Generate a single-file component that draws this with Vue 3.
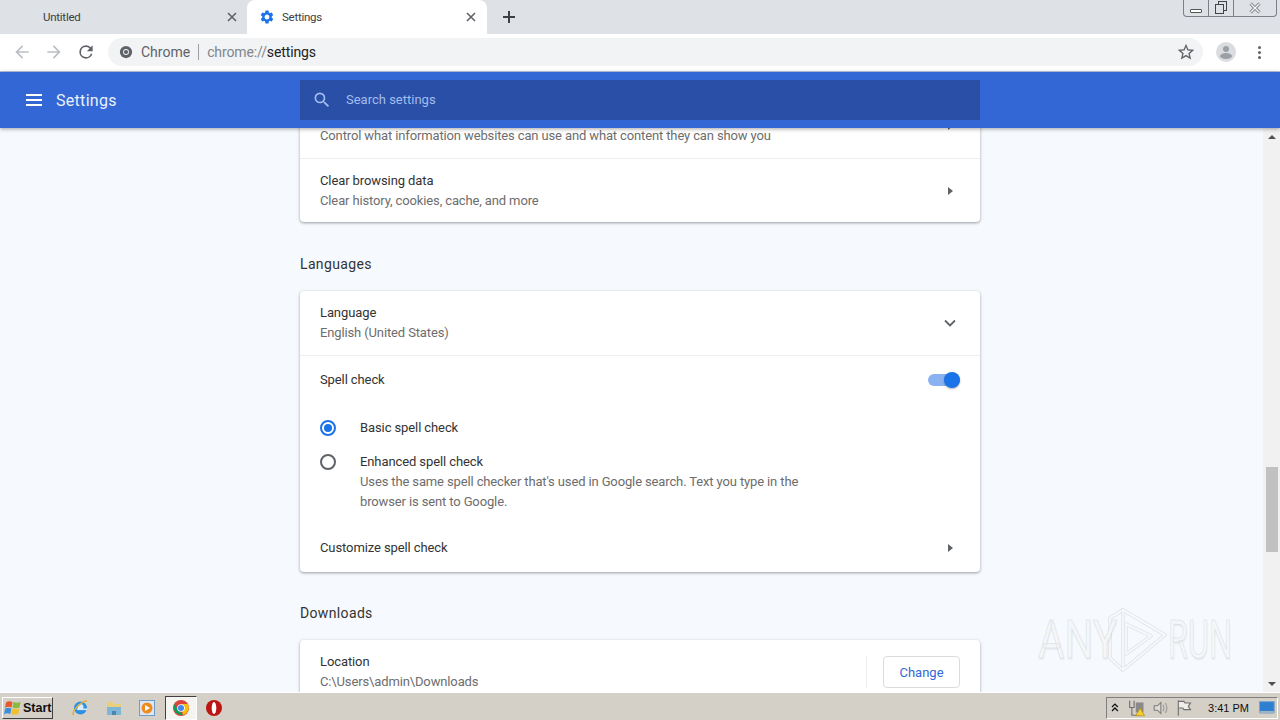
<template>
  <div class="window">
    <!-- tab strip -->
    <div class="tabstrip">
      <div class="tab">
        <span class="tab-title">Untitled</span>
        <svg class="tab-close" viewBox="0 0 10 10"><path d="M1 1l8 8M9 1l-8 8" /></svg>
      </div>
      <div class="tab active">
        <svg class="gear" viewBox="0 0 24 24"><path :d="gearPath" /></svg>
        <span class="tab-title">Settings</span>
        <svg class="tab-close" viewBox="0 0 10 10"><path d="M1 1l8 8M9 1l-8 8" /></svg>
      </div>
      <svg class="new-tab" viewBox="0 0 12 12"><path d="M6 0v12M0 6h12" /></svg>
      <div class="win-controls">
        <div class="win-btn min"><span class="min-bar"></span></div>
        <div class="win-btn restore"><span class="back"></span><span class="front"></span></div>
        <div class="win-btn close">
          <svg viewBox="0 0 14 12">
            <path class="x-outer" d="M2.500 1.500l9 9M11.500 1.500l-9 9" />
            <path class="x-inner" d="M2.500 1.500l9 9M11.500 1.500l-9 9" />
          </svg>
        </div>
      </div>
    </div>

    <!-- toolbar -->
    <div class="toolbar">
      <svg class="nav-icon" viewBox="0 0 24 24"><path fill="#bcc0c4" d="M20 11H7.830l5.590-5.590L12 4l-8 8 8 8 1.410-1.410L7.830 13H20z" /></svg>
      <svg class="nav-icon" viewBox="0 0 24 24"><path fill="#bcc0c4" d="M4 11h12.170l-5.590-5.590L12 4l8 8-8 8-1.410-1.410L16.170 13H4z" /></svg>
      <svg class="nav-icon" viewBox="0 0 24 24"><path fill="#5f6368" d="M17.650 6.350A7.960 7.960 0 0 0 12 4a8 8 0 1 0 7.730 10h-2.080A6 6 0 1 1 12 6c1.660 0 3.140.69 4.220 1.780L13 11h7V4z" /></svg>
      <div class="omnibox">
        <svg class="chrome-mini" viewBox="0 0 16 16">
          <circle cx="8" cy="8" r="7" fill="#5f6368" />
          <circle cx="8" cy="8" r="3.400" fill="#f1f3f4" />
          <circle cx="8" cy="8" r="2.400" fill="#5f6368" />
        </svg>
        <span class="chip">Chrome</span>
        <span class="chip-sep"></span>
        <span class="url"><span class="url-dim">chrome://</span>settings</span>
        <svg class="star" viewBox="0 0 24 24"><path fill="#5f6368" d="M22 9.240l-7.190-.62L12 2 9.190 8.630 2 9.240l5.460 4.730L5.820 21 12 17.270 18.180 21l-1.630-7.030L22 9.240zM12 15.400l-3.760 2.270 1-4.280-3.320-2.880 4.380-.38L12 6.100l1.710 4.040 4.380.38-3.320 2.880 1 4.280L12 15.400z" /></svg>
      </div>
      <div class="avatar">
        <svg viewBox="0 0 20 20">
          <circle cx="10" cy="10" r="10" fill="#dadce0" />
          <circle cx="10" cy="7" r="3" fill="#9aa0a6" />
          <ellipse cx="10" cy="14" rx="6" ry="3" fill="#9aa0a6" />
        </svg>
      </div>
      <div class="dots"><span></span><span></span><span></span></div>
    </div>

    <!-- settings header -->
    <header class="settings-bar">
      <div class="bar-left">
        <div class="burger"><span></span><span></span><span></span></div>
        <span class="bar-title">Settings</span>
      </div>
      <div class="search">
        <svg class="search-icon" viewBox="0 0 24 24"><path fill="#a3bdf0" d="M15.500 14h-.79l-.28-.27A6.470 6.470 0 0 0 16 9.500 6.500 6.500 0 1 0 9.500 16c1.610 0 3.090-.59 4.230-1.570l.27.28v.79l5 4.990L20.490 19l-4.990-5zm-6 0C7.010 14 5 11.990 5 9.500S7.010 5 9.500 5 14 7.010 14 9.500 11.990 14 9.500 14z" /></svg>
        <span class="search-text">Search settings</span>
      </div>
    </header>

    <!-- page -->
    <div class="body">
      <main class="content">
        <div class="column">
          <section class="card">
            <div class="row two-line">
              <!-- 这一行的标题已滚到顶栏下面 -->
              <div class="row-text scrolled">
                <div class="sub">Control what information websites can use and what content they can show you</div>
              </div>
              <span class="arrow"></span>
            </div>
            <div class="row two-line sep">
              <div class="row-text">
                <div class="title">Clear browsing data</div>
                <div class="sub">Clear history, cookies, cache, and more</div>
              </div>
              <span class="arrow"></span>
            </div>
          </section>

          <h2 class="heading">Languages</h2>
          <section class="card">
            <div class="row two-line">
              <div class="row-text">
                <div class="title">Language</div>
                <div class="sub">English (United States)</div>
              </div>
              <svg class="chevron" viewBox="0 0 12 8"><path d="M1 1.500l5 5 5-5" /></svg>
            </div>
            <div class="row spell sep">
              <div class="title">Spell check</div>
              <div class="toggle"><span class="knob"></span></div>
            </div>
            <div class="radio-row">
              <span class="radio on"></span>
              <div class="title">Basic spell check</div>
            </div>
            <div class="radio-row tall">
              <span class="radio"></span>
              <div class="row-text">
                <div class="title">Enhanced spell check</div>
                <div class="sub desc">Uses the same spell checker that's used in Google search. Text you type in the browser is sent to Google.</div>
              </div>
            </div>
            <div class="row customize">
              <div class="title">Customize spell check</div>
              <span class="arrow"></span>
            </div>
          </section>

          <h2 class="heading compact">Downloads</h2>
          <section class="card">
            <div class="row two-line">
              <div class="row-text">
                <div class="title">Location</div>
                <div class="sub">C:\Users\admin\Downloads</div>
              </div>
              <div class="row-action"><button class="btn">Change</button></div>
            </div>
          </section>
        </div>
      </main>
      <div class="scrollbar">
        <span class="sb-up"></span>
        <div class="sb-track"><span class="sb-thumb"></span></div>
        <span class="sb-down"></span>
      </div>

      <!-- watermark -->
      <div class="watermark">
        <span class="wm-any">ANY</span>
        <svg viewBox="0 0 65 64">
          <g class="wm-under">
            <path d="M18 2L60 27 18 62zM21 16l25 12-25 18z" />
            <path d="M18 2L5 10v40l13 12" />
          </g>
          <g class="wm-over">
            <path d="M18 2L60 27 18 62zM21 16l25 12-25 18z" />
            <path d="M18 2L5 10v40l13 12" />
          </g>
        </svg>
        <span class="wm-run">RUN</span>
      </div>
    </div>

    <!-- taskbar -->
    <footer class="taskbar">
      <div class="start">
        <svg viewBox="0 0 18 16">
          <path fill="#e8582a" d="M2 2.500C4 1 6 1 8.500 2L7.500 7.500C5 6.500 3 6.500 1 8z" />
          <path fill="#8cba3c" d="M9.500 2c2.500 1 4.500 1 7 0l-1 5.500c-2.500 1-4.500 1-7 0z" />
          <path fill="#3b8ed8" d="M1 9c2-1.500 4-1.500 6.300-.5l-1 5.500C4 13 2 13 0 14.500z" />
          <path fill="#f2c02e" d="M8.300 8.500c2.500 1 4.500 1 7 0l-1 5.500c-2.500 1-4.500 1-7 0z" />
        </svg>
        <span>Start</span>
      </div>
      <div class="apps">
        <div class="app">
          <svg viewBox="0 0 18 18">
            <circle cx="9.500" cy="9" r="6.500" fill="#2f8fe0" />
            <circle cx="9.500" cy="8" r="3" fill="#d8ecfa" />
            <rect x="6" y="9.500" width="10" height="1.600" fill="#d8ecfa" />
            <path d="M2.500 16C0 12 11 2 16 2" fill="none" stroke="#d9b23a" stroke-width="1.600" />
          </svg>
        </div>
        <div class="app">
          <svg viewBox="0 0 18 18">
            <path fill="#e9cf7c" d="M2 3h6l1 2h7v4H2z" />
            <path fill="#7fb6d8" d="M2 8h14v8H2z" />
            <path fill="#4c86ad" d="M7 12h4v4H7z" />
          </svg>
        </div>
        <div class="app">
          <svg viewBox="0 0 18 18">
            <rect x="1.500" y="1.500" width="15" height="15" fill="#dbe8f4" stroke="#6d9cc6" />
            <circle cx="9" cy="9" r="5.500" fill="#ef8a1e" />
            <path fill="#fff" d="M7 6l5 3-5 3z" />
          </svg>
        </div>
        <div class="app current">
          <svg viewBox="0 0 18 18">
            <circle cx="9" cy="9" r="8" fill="#db4437" />
            <path fill="#f4c20d" d="M9 5h7a8 8 0 0 1-5 11z" />
            <path fill="#0f9d58" d="M2.200 5.200L6 11l5 5A8 8 0 0 1 2.200 5.200z" />
            <circle cx="9" cy="9" r="3.800" fill="#fff" />
            <circle cx="9" cy="9" r="3" fill="#4285f4" />
          </svg>
        </div>
        <div class="app">
          <svg viewBox="0 0 18 18">
            <circle cx="9" cy="9" r="8" fill="#bd1512" />
            <ellipse cx="9" cy="9" rx="2.300" ry="6" fill="#fff" />
          </svg>
        </div>
      </div>
      <div class="tray">
        <svg class="tray-up" viewBox="0 0 8 10"><path d="M1 4l3-3 3 3M1 8l3-3 3 3" /></svg>
        <svg class="tray-icon" viewBox="0 0 16 16">
          <path fill="none" stroke="#6f6f6f" d="M1.500 1.500v6h4v-6M3.500 7.500v7h7" />
          <rect x="7" y="3" width="7" height="9" fill="#8a8a8a" />
          <path fill="#f4cf2e" stroke="#a98a10" stroke-width=".6" d="M11 8l4 7H7z" />
        </svg>
        <svg class="tray-icon" viewBox="0 0 16 16">
          <path fill="#dedcd6" stroke="#7d7d7d" d="M2 6h3l3-3v10l-3-3H2z" />
          <path fill="none" stroke="#9a9a9a" d="M10 5c1 2 1 4 0 6M12 3.500c2 3 2 6 0 9" />
        </svg>
        <svg class="tray-icon" viewBox="0 0 16 16">
          <path fill="#f0eee8" stroke="#6f6f6f" d="M3 2h5l1 1.500h5l-2 3 2 3H8L7 8H3" />
          <path stroke="#6f6f6f" d="M3 1v14" />
        </svg>
        <span class="clock">3:41 PM</span>
        <svg class="desktop" viewBox="0 0 16 14">
          <rect x=".5" y=".5" width="15" height="11" fill="#2f7fd0" stroke="#7fa5c6" />
          <rect x="1" y="10" width="14" height="3" fill="#9eb3c4" />
        </svg>
      </div>
    </footer>
  </div>
</template>

<script setup>
// 设置页齿轮图标
const gearPath =
  'M19.14 12.94c.04-.3.06-.61.06-.94 0-.32-.02-.64-.07-.94l2.03-1.58c.18-.14.23-.41.12-.61l-1.92-3.32c-.12-.22-.37-.29-.59-.22l-2.39.96c-.5-.38-1.03-.7-1.62-.94l-.36-2.54c-.04-.24-.24-.41-.48-.41h-3.84c-.24 0-.43.17-.47.41l-.36 2.54c-.59.24-1.13.57-1.62.94l-2.39-.96c-.22-.08-.47 0-.59.22L2.74 8.87c-.12.21-.08.47.12.61l2.03 1.58c-.05.3-.09.63-.09.94s.02.64.07.94l-2.03 1.58c-.18.14-.23.41-.12.61l1.92 3.32c.12.22.37.29.59.22l2.39-.96c.5.38 1.03.7 1.62.94l.36 2.54c.05.24.24.41.48.41h3.84c.24 0 .44-.17.47-.41l.36-2.54c.59-.24 1.13-.56 1.62-.94l2.39.96c.22.08.47 0 .59-.22l1.92-3.32c.12-.22.07-.47-.12-.61l-2.01-1.58zM12 15.6c-1.98 0-3.6-1.62-3.6-3.6s1.62-3.6 3.6-3.6 3.6 1.62 3.6 3.6-1.62 3.6-3.6 3.6z'
</script>

<style>
html,
body {
  margin: 0;
  overflow: hidden;
}
</style>

<style scoped>
.window {
  width: 1280px;
  height: 720px;
  display: flex;
  flex-direction: column;
  overflow: hidden;
  font-family: Roboto, "Liberation Sans", sans-serif;
  font-size: 13px;
  color: #333;
  background: #f6f9fd;
}

/* tab strip */
.tabstrip {
  height: 34px;
  flex: none;
  display: flex;
  align-items: flex-end;
  background: #dee1e6;
  position: relative;
}

.tab {
  width: 247px;
  height: 34px;
  box-sizing: border-box;
  padding: 0 10px 0 43px;
  display: flex;
  align-items: center;
  font-size: 11.5px;
  letter-spacing: -0.25px;
}

.tab.active {
  width: 240px;
  background: #fff;
  border-radius: 8px 8px 0 0;
  padding: 0 11px 0 12px;
}

.tab-title {
  flex: 1;
  color: #3c4043;
  white-space: nowrap;
}

.gear {
  width: 16px;
  height: 16px;
  margin-right: 7px;
  fill: #1a73e8;
}

.tab-close {
  width: 10px;
  height: 10px;
  fill: none;
  stroke: #5f6368;
  stroke-width: 1.6;
}

.new-tab {
  width: 12px;
  height: 12px;
  margin: 0 0 11px 16px;
  fill: none;
  stroke: #3c4043;
  stroke-width: 2;
}

.win-controls {
  position: absolute;
  top: 0;
  left: 1183px;
  height: 16px;
  display: flex;
  border: 1px solid #7b8087;
  border-top: none;
  border-radius: 0 0 4px 4px;
}

.win-btn {
  display: flex;
  align-items: center;
  justify-content: center;
  position: relative;
  box-sizing: border-box;
}

.min {
  width: 25px;
  border-right: 1px solid #7b8087;
}

.min-bar {
  width: 10px;
  height: 2px;
  margin-top: 5px;
  border: 1px solid #555;
  border-radius: 1px;
  background: #fff;
}

.restore {
  width: 25px;
  border-right: 1px solid #7b8087;
}

.back,
.front {
  position: absolute;
  border: 1px solid #444;
  background: #dee1e6;
}

.back {
  top: 1px;
  left: 9px;
  width: 7px;
  height: 8px;
}

.front {
  top: 4px;
  left: 6px;
  width: 7px;
  height: 8px;
}

.close {
  width: 42px;
}

.close svg {
  width: 14px;
  height: 12px;
  fill: none;
}

.x-outer {
  stroke: #666;
  stroke-width: 3;
}

.x-inner {
  stroke: #f4f5f6;
  stroke-width: 1.5;
}

/* toolbar */
.toolbar {
  height: 38px;
  flex: none;
  box-sizing: border-box;
  padding: 0 12px 1px 12px;
  display: flex;
  align-items: center;
  background: #fff;
  border-bottom: 1px solid #b9c6e0;
}

.nav-icon {
  width: 20px;
  height: 20px;
  margin-right: 12px;
  flex: none;
}

.omnibox {
  width: 1095px;
  height: 28px;
  flex: none;
  box-sizing: border-box;
  padding: 0 7px 0 11px;
  display: flex;
  align-items: center;
  background: #f1f3f4;
  border-radius: 14px;
  font-size: 14px;
}

.chrome-mini {
  width: 14px;
  height: 14px;
  margin-right: 8px;
}

.chip {
  color: #5f6368;
}

.chip-sep {
  width: 1px;
  height: 16px;
  margin: 0 8px;
  background: #9aa0a6;
}

.url {
  flex: 1;
  color: #202124;
  letter-spacing: -0.12px;
}

.url-dim {
  color: #80868b;
}

.star {
  width: 20px;
  height: 20px;
}

.avatar {
  width: 20px;
  height: 20px;
  margin-left: 13px;
}

.avatar svg {
  display: block;
  width: 20px;
  height: 20px;
}

.dots {
  margin-left: 22px;
  display: flex;
  flex-direction: column;
  gap: 2px;
}

.dots span {
  width: 3px;
  height: 3px;
  border-radius: 50%;
  background: #5f6368;
}

/* settings bar */
.settings-bar {
  height: 56px;
  flex: none;
  display: flex;
  align-items: center;
  background: #3367d6;
  box-shadow: 0 1px 4px rgba(0, 0, 0, 0.35);
  position: relative;
  z-index: 2;
}

.bar-left {
  width: 300px;
  flex: none;
  box-sizing: border-box;
  padding-left: 26px;
  display: flex;
  align-items: center;
}

.burger {
  width: 16px;
  display: flex;
  flex-direction: column;
  gap: 3px;
  margin-right: 14px;
}

.burger span {
  height: 2px;
  background: #fff;
}

.bar-title {
  color: #eaf0fc;
  font-size: 16px;
  letter-spacing: 0.3px;
}

.search {
  width: 680px;
  height: 40px;
  box-sizing: border-box;
  padding-left: 12px;
  display: flex;
  align-items: center;
  background: #2a4fa6;
}

.search-icon {
  width: 20px;
  height: 20px;
  margin-right: 14px;
}

.search-text {
  margin-top: -1px;
  color: #a3bdf0;
  font-size: 13px;
}

/* page */
.body {
  flex: 1;
  min-height: 0;
  display: flex;
  position: relative;
}

.content {
  flex: 1;
  min-width: 0;
  overflow: hidden;
}

.column {
  width: 680px;
  margin: -34px 0 0 300px;
}

.card {
  background: #fff;
  border-radius: 4px;
  box-shadow: 0 1px 2px rgba(60, 64, 67, 0.3), 0 1px 3px 1px rgba(60, 64, 67, 0.15);
}

.heading {
  margin: 0;
  padding: 32px 0 17px;
  font-size: 14px;
  font-weight: 400;
  line-height: 20px;
  letter-spacing: 0.35px;
  color: #333;
}

.heading.compact {
  padding-top: 31px;
}

.row {
  display: flex;
  align-items: center;
  justify-content: space-between;
  padding: 0 20px;
  box-sizing: border-box;
}

.two-line {
  height: 64px;
}

.sep {
  border-top: 1px solid #eee;
}

.row-text {
  flex: 1;
}

.row-text.scrolled {
  padding-top: 20px;
}

.title,
.sub {
  line-height: 20px;
}

.title {
  color: #333;
  letter-spacing: -0.1px;
}

.sub {
  color: #6d6d6d;
  letter-spacing: -0.13px;
}

.arrow {
  width: 0;
  height: 0;
  margin-right: 7px;
  border-left: 5px solid #5f6368;
  border-top: 4px solid transparent;
  border-bottom: 4px solid transparent;
}

.chevron {
  width: 12px;
  height: 8px;
  margin-right: 4px;
  fill: none;
  stroke: #5f6368;
  stroke-width: 1.8;
}

.spell {
  height: 49px;
}

.toggle {
  width: 32px;
  height: 12px;
  border-radius: 6px;
  background: #8ab2f0;
  position: relative;
}

.knob {
  position: absolute;
  top: -2px;
  right: 0;
  width: 16px;
  height: 16px;
  border-radius: 50%;
  background: #1a73e8;
  box-shadow: 0 1px 2px rgba(0, 0, 0, 0.3);
}

.radio-row {
  height: 48px;
  box-sizing: border-box;
  padding-left: 20px;
  display: flex;
  align-items: center;
}

.radio-row.tall {
  height: 71px;
  align-items: flex-start;
}

.radio {
  width: 16px;
  height: 16px;
  flex: none;
  margin-right: 24px;
  box-sizing: border-box;
  border: 2px solid #5f6368;
  border-radius: 50%;
  position: relative;
}

.tall .radio {
  margin-top: 2px;
}

.radio.on {
  border-color: #1a73e8;
}

.radio.on::after {
  content: "";
  position: absolute;
  top: 2px;
  left: 2px;
  width: 8px;
  height: 8px;
  border-radius: 50%;
  background: #1a73e8;
}

.desc {
  width: 460px;
}

.customize {
  height: 49px;
}

.row-action {
  height: 32px;
  padding-left: 16px;
  display: flex;
  align-items: center;
  border-left: 1px solid #eee;
}

.btn {
  width: 77px;
  height: 32px;
  background: #fff;
  border: 1px solid #dadce0;
  border-radius: 4px;
  color: #3367d6;
  font-family: inherit;
  font-size: 13px;
  font-weight: 400;
}

/* scrollbar */
.scrollbar {
  width: 17px;
  flex: none;
  display: flex;
  flex-direction: column;
  background: #f1f1f1;
}

.sb-up,
.sb-down {
  height: 17px;
  flex: none;
  display: flex;
  align-items: center;
  justify-content: center;
}

.sb-up::after {
  content: "";
  border: 4px solid transparent;
  border-top: none;
  border-bottom: 4px solid #505050;
}

.sb-down::after {
  content: "";
  border: 4px solid transparent;
  border-bottom: none;
  border-top: 4px solid #505050;
}

.sb-track {
  flex: 1;
  padding: 322px 2px 0 3px;
  box-sizing: border-box;
}

.sb-thumb {
  display: block;
  height: 85px;
  background: #c1c1c1;
}

/* watermark */
.watermark {
  position: absolute;
  left: 1038px;
  top: 480px;
  height: 64px;
  display: flex;
  align-items: center;
  font-size: 54px;
  font-weight: 400;
  line-height: 60px;
  color: #f4f6f9;
  -webkit-text-stroke: 1px rgba(150, 155, 160, 0.2);
  text-shadow: 1px 2px 2px rgba(0, 0, 0, 0.05);
  pointer-events: none;
}

.wm-any,
.wm-run {
  display: inline-block;
  transform-origin: left center;
}

.wm-any {
  width: 62px;
  transform: scaleX(0.75);
}

.wm-run {
  width: 60px;
  margin-left: -2px;
  transform: scaleX(0.6);
}

.watermark svg {
  width: 65px;
  height: 64px;
  margin-left: 5px;
  fill: none;
  stroke-linejoin: round;
}

.wm-under {
  stroke: rgba(150, 155, 160, 0.16);
  stroke-width: 4;
}

.wm-over {
  stroke: #f9fbfd;
  stroke-width: 1.5;
}

/* taskbar */
.taskbar {
  height: 28px;
  flex: none;
  box-sizing: border-box;
  padding: 2px 2px 0;
  display: flex;
  align-items: center;
  background: #d4d0c8;
  border-top: 1px solid #fff;
  font-family: "Liberation Sans", Arial, sans-serif;
}

.start {
  width: 51px;
  height: 22px;
  box-sizing: border-box;
  display: flex;
  align-items: center;
  gap: 1px;
  padding-left: 1px;
  border: 1px solid;
  border-color: #fff #404040 #404040 #fff;
  font-size: 12.5px;
  font-weight: 700;
  color: #111;
}

.start svg {
  width: 18px;
  height: 16px;
}

.apps {
  display: flex;
  align-items: center;
  margin-left: 11px;
  gap: 1.5px;
  flex: 1;
}

.app {
  width: 32px;
  height: 24px;
  box-sizing: border-box;
  display: flex;
  align-items: center;
  justify-content: center;
}

.app svg {
  width: 18px;
  height: 18px;
}

.app.current {
  background: #f5f4f0;
  border: 1px solid;
  border-color: #404040 #fff #fff #404040;
}

.tray {
  width: 172px;
  height: 22px;
  box-sizing: border-box;
  padding: 0 2px 0 4px;
  display: flex;
  align-items: center;
  border: 1px solid;
  border-color: #808080 #fff #fff #808080;
  font-size: 11px;
  color: #111;
}

.tray-up {
  width: 8px;
  height: 10px;
  margin-right: 9px;
  fill: none;
  stroke: #111;
  stroke-width: 1.3;
}

.tray-icon {
  width: 18px;
  height: 18px;
  margin-right: 6px;
}

.clock {
  margin-left: 9px;
  width: 52px;
}

.desktop {
  width: 16px;
  height: 14px;
  margin-left: auto;
}
</style>
